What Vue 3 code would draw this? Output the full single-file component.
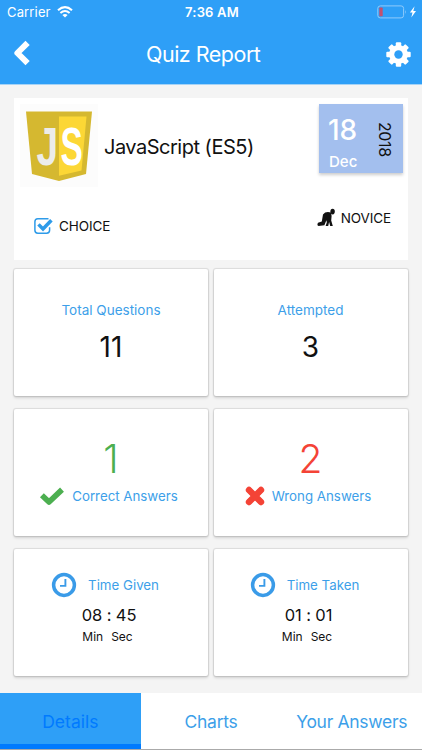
<template>
  <div class="report-page">
    <header class="app-header">
      <div class="status-bar">
        <div class="status-left">
          <span class="carrier">Carrier</span>
          <svg class="wifi" viewBox="0 0 16 12" width="16" height="12">
            <path d="M1 4.3 Q8 -2 15 4.3" fill="none" stroke="#fff" stroke-width="2.1" />
            <path d="M3.4 7 Q8 3 12.6 7" fill="none" stroke="#fff" stroke-width="2" />
            <path d="M5.4 9 Q8 6.8 10.6 9 L8 11.6 Z" fill="#fff" />
          </svg>
        </div>
        <span class="clock">7:36 AM</span>
        <svg class="battery" viewBox="0 0 40 14" width="40" height="14">
          <rect x="0.8" y="0.9" width="25.8" height="12" rx="2.5" fill="none" stroke="#8fcbfb" />
          <rect x="2.3" y="2.6" width="3.4" height="8.6" rx="0.6" fill="#c2506f" />
          <path d="M28.2 5 Q29.8 7 28.2 9 Z" fill="#8fcbfb" />
          <path d="M37.6 1.3 L32.9 7.6 H35.5 L34.3 12.5 L39 6 H36.3 Z" fill="#fff" />
        </svg>
      </div>
      <div class="nav-bar">
        <svg class="back" viewBox="0 0 18 26" width="18" height="26">
          <path d="M14.6 2.8 L4.4 13 L14.6 23.2" fill="none" stroke="#fff" stroke-width="6" stroke-linejoin="round" />
        </svg>
        <h1 class="nav-title">Quiz Report</h1>
        <svg class="gear" viewBox="-12.5 -12.5 25 25" width="25" height="25">
          <rect
            v-for="angle in [0, 45, 90, 135]"
            :key="angle"
            x="-2.7"
            y="-12.2"
            width="5.4"
            height="24.4"
            rx="1"
            fill="#fff"
            :transform="`rotate(${angle})`"
          />
          <circle r="6.8" fill="none" stroke="#fff" stroke-width="5.2" />
          <circle r="4.2" fill="#2e9ff7" />
        </svg>
      </div>
    </header>

    <main class="content">
      <section class="summary">
        <div class="summary-top">
          <div class="logo-box">
            <svg viewBox="0 0 78 83" width="78" height="83">
              <polygon points="6,7.5 72,7.5 66,70 39,77 12,70" fill="#d5b830" />
              <polygon points="39,12.5 66.5,12.5 61.5,66.5 39,71.8" fill="#fcd735" />
              <text class="logo-text" transform="translate(16.5 61) scale(0.72 1)" fill="#ececea">J</text>
              <text class="logo-text" transform="translate(40.6 61) scale(0.62 1)" fill="#fff">S</text>
            </svg>
          </div>
          <h2 class="subject">JavaScript (ES5)</h2>
          <div class="date-box">
            <div class="day-month">
              <span class="day">18</span>
              <span class="month">Dec</span>
            </div>
            <span class="year">2018</span>
          </div>
        </div>
        <div class="summary-bottom">
          <div class="quiz-type">
            <svg viewBox="0 0 20 18" width="20" height="18">
              <path d="M14.5 1.8 H3.8 Q0.9 1.8 0.9 4.7 V13.3 Q0.9 16.2 3.8 16.2 H12.6 Q15.6 16.2 15.6 13.3 V10.2" fill="none" stroke="#2e9be9" stroke-width="1.5" />
              <path d="M4.5 7.4 L9 12 L17.4 3.2" fill="none" stroke="#2e9be9" stroke-width="3.5" />
            </svg>
            <span>CHOICE</span>
          </div>
          <div class="quiz-level">
            <svg viewBox="0 0 19 19" width="19" height="19">
              <ellipse cx="15.6" cy="3.6" rx="2.2" ry="2.8" fill="#111" />
              <path d="M14 4.6 Q8.6 3 6 6.6 L4.8 13.6 L1 14.8 Q-0.4 17.8 1.6 18 L7.4 17.2 L9.4 12.2 L9.8 14.6 L8.6 18 H11.2 L12.1 14 L13.2 18 H15.8 L14.2 12.4 L14.6 8 Z" fill="#111" />
            </svg>
            <span>NOVICE</span>
          </div>
        </div>
      </section>

      <section class="stats">
        <div v-for="item in totals" :key="item.label" class="card total">
          <span class="label">{{ item.label }}</span>
          <span class="number">{{ item.value }}</span>
        </div>

        <div class="card answers correct">
          <span class="score">1</span>
          <div class="answer-row">
            <svg viewBox="0 0 26 20" width="26" height="20">
              <path d="M2.9 9.2 L10 16 L23 3.6" fill="none" stroke="#4caf50" stroke-width="5.6" stroke-linejoin="round" />
            </svg>
            <span class="label">Correct Answers</span>
          </div>
        </div>
        <div class="card answers wrong">
          <span class="score">2</span>
          <div class="answer-row">
            <svg viewBox="0 0 20 20" width="20" height="20">
              <path d="M3.1 3.1 L16.9 16.9 M16.9 3.1 L3.1 16.9" fill="none" stroke="#f44336" stroke-width="5.4" />
              <path d="M4 4 L16 16 M16 4 L4 16" fill="none" stroke="#f44336" stroke-width="6.4" stroke-linecap="round" />
            </svg>
            <span class="label">Wrong Answers</span>
          </div>
        </div>

        <div v-for="item in times" :key="item.label" class="card time">
          <div class="time-head">
            <svg viewBox="0 0 26 26" width="26" height="26">
              <circle cx="13" cy="13" r="10.4" fill="none" stroke="#3a9be8" stroke-width="3.5" />
              <path d="M14.4 7 V13.9 H9" fill="none" stroke="#3a9be8" stroke-width="1.9" />
            </svg>
            <span class="label">{{ item.label }}</span>
          </div>
          <span class="duration">{{ item.value }}</span>
          <div class="units"><span>Min</span><span>Sec</span></div>
        </div>
      </section>
    </main>

    <nav class="tabs">
      <button
        v-for="tab in tabs"
        :key="tab"
        class="tab"
        :class="{ active: tab === activeTab }"
        @click="activeTab = tab"
      >
        {{ tab }}
      </button>
    </nav>
  </div>
</template>

<script setup>
import { ref } from 'vue';

const totals = [
  { label: 'Total Questions', value: 11 },
  { label: 'Attempted', value: 3 }
];

const times = [
  { label: 'Time Given', value: '08 : 45' },
  { label: 'Time Taken', value: '01 : 01' }
];

const tabs = ['Details', 'Charts', 'Your Answers'];
const activeTab = ref('Details');
</script>

<style>
body {
  background: #f4f4f4;
}
</style>

<style scoped>
.report-page {
  width: 100%;
  height: 750px;
  display: flex;
  flex-direction: column;
  box-sizing: border-box;
  background: #f4f4f4;
  font-family: Inter, "Liberation Sans", sans-serif;
  color: #111;
  white-space: nowrap;
  overflow: hidden;
}
svg {
  display: block;
  flex: none;
}

.app-header {
  height: 85px;
  box-sizing: border-box;
  background: #2e9ff7;
  border-bottom: 1px solid #a6d3f6;
  color: #fff;
  flex: none;
}
.status-bar {
  display: grid;
  grid-template-columns: 1fr auto 1fr;
  align-items: center;
  height: 24px;
  padding: 0 5px 0 7px;
  font-size: 13px;
}
.status-left {
  display: flex;
  align-items: center;
  gap: 6px;
}
.carrier {
  letter-spacing: 0.15px;
}
.clock {
  font-weight: 600;
  font-size: 13px;
  letter-spacing: 0.2px;
}
.battery {
  justify-self: end;
}
.nav-bar {
  display: grid;
  grid-template-columns: 133px 1fr auto;
  align-items: center;
  height: 60px;
  padding: 0 11px 0 13px;
}
.back {
  margin-top: -3px;
}
.nav-title {
  margin: -1px 0 0;
  font-size: 21.5px;
  font-weight: 400;
  letter-spacing: -0.5px;
}

.content {
  padding: 13px 14px 0;
  flex: 1;
}
.summary {
  height: 162px;
  box-sizing: border-box;
  background: #fff;
}
.summary-top {
  display: flex;
  padding: 6px 5px 0 6px;
}
.logo-box {
  width: 78px;
  height: 83px;
  background: #fcfcfc;
}
.logo-text {
  font-family: "Liberation Sans", sans-serif;
  font-size: 54px;
  font-weight: 700;
}
.subject {
  margin: 31px 0 0 6px;
  font-size: 20px;
  line-height: 24px;
  font-weight: 400;
  letter-spacing: -0.5px;
  flex: 1;
}
.date-box {
  width: 84px;
  height: 69px;
  box-sizing: border-box;
  display: flex;
  justify-content: space-between;
  padding: 0 11px 0 9px;
  background: #a3bfee;
  box-shadow: 0 2px 3px rgba(0, 0, 0, 0.2);
}
.day-month {
  display: flex;
  flex-direction: column;
  color: #fff;
}
.day {
  margin-top: 9px;
  font-size: 28px;
  line-height: 34px;
  font-weight: 500;
}
.month {
  margin-top: 5px;
  margin-left: 1px;
  font-size: 15px;
  line-height: 20px;
  font-weight: 500;
}
.year {
  writing-mode: vertical-rl;
  margin-top: 18px;
  font-size: 16px;
  line-height: 15px;
  letter-spacing: -0.4px;
}
.summary-bottom {
  display: flex;
  justify-content: space-between;
  padding: 21px 17px 0 20px;
  font-size: 13.5px;
}
.quiz-type,
.quiz-level {
  display: flex;
  align-items: center;
  height: 19px;
  gap: 5px;
  letter-spacing: -0.1px;
}
.quiz-type {
  margin-top: 8px;
}

.stats {
  display: grid;
  grid-template-columns: 194px 194px;
  grid-auto-rows: 127px;
  gap: 13px 5.5px;
  margin-top: 8.5px;
}
.card {
  box-sizing: border-box;
  display: flex;
  flex-direction: column;
  align-items: center;
  background: #fff;
  border-radius: 2px;
  box-shadow: 0 0 1px 1px rgba(0, 0, 0, 0.1), 0 2px 3px rgba(0, 0, 0, 0.14);
}
.label {
  color: #3d9fe9;
  font-size: 13.5px;
  line-height: 18px;
}
.total .label {
  margin-top: 32px;
}
.number {
  margin-top: 11px;
  font-size: 28px;
  line-height: 34px;
}
.score {
  margin-top: 26px;
  font-size: 39px;
  line-height: 48px;
  font-weight: 350;
}
.correct .score {
  color: #4caf50;
}
.wrong .score {
  color: #f44336;
}
.answer-row {
  display: flex;
  align-items: center;
  gap: 7px;
  margin-top: 3px;
  margin-right: 5px;
}
.answer-row .label {
  font-size: 13.3px;
}
.time-head {
  display: flex;
  align-items: center;
  gap: 11px;
  margin-top: 23px;
  margin-right: 12px;
}
.time-head .label {
  font-size: 13.3px;
}
.duration {
  margin-top: 7.5px;
  margin-right: 4px;
  font-size: 16.5px;
  line-height: 20px;
  letter-spacing: -0.1px;
}
.units {
  display: flex;
  gap: 8px;
  margin-top: 4px;
  margin-right: 7px;
  font-size: 12px;
  line-height: 16px;
}

.tabs {
  display: grid;
  grid-template-columns: repeat(3, 1fr);
  height: 57px;
  box-sizing: border-box;
  background: #fff;
  border-bottom: 1px solid #aaa;
  flex: none;
}
.tab {
  padding: 5px 0 0;
  border: 0;
  border-bottom: 5px solid transparent;
  background: none;
  color: #3d9fe9;
  font-family: inherit;
  font-size: 17.5px;
  letter-spacing: -0.3px;
}
.tab.active {
  background: #2e9ff7;
  border-bottom-color: #007aff;
  color: #007aff;
  letter-spacing: 0;
}
</style>
